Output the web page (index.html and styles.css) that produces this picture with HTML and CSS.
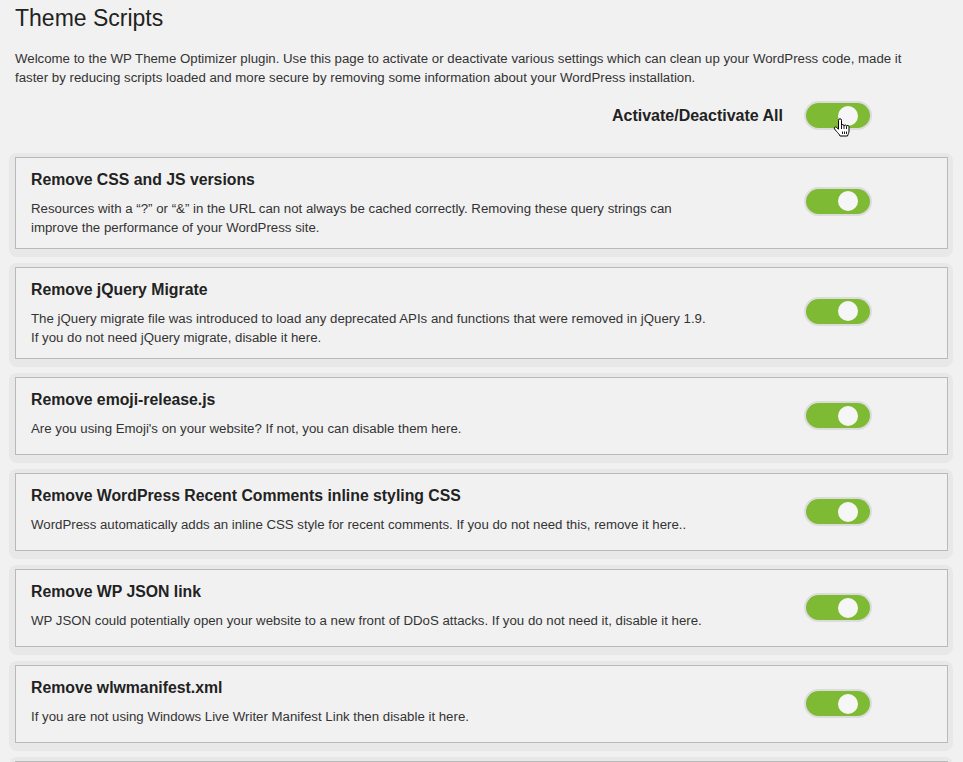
FILE: index.html
```html
<!DOCTYPE html>
<html lang="en">
<head>
<meta charset="utf-8">
<title>Theme Scripts</title>
<link rel="stylesheet" href="styles.css">
</head>
<body>
<div class="wrap">
  <h2 class="page-title">Theme Scripts</h2>
  <p class="intro">Welcome to the WP Theme Optimizer plugin. Use this page to activate or deactivate various settings which can clean up your WordPress code, made it<br>faster by reducing scripts loaded and more secure by removing some information about your WordPress installation.</p>

  <div class="all-row">
    <span class="all-label">Activate/Deactivate All</span>
    <span class="toggle toggle-all">
      <span class="knob"></span>
      <svg class="cursor" width="18" height="19" viewBox="0 0 18 19" aria-hidden="true">
        <path d="M5.5 2.3 A1.5 1.5 0 0 1 8.5 2.3 V7.4 A1.3 1.3 0 0 1 11 7.8 A1.3 1.3 0 0 1 13.5 8.4 A1.25 1.25 0 0 1 16 9.2 V13 C16 15 15 16.2 14.5 18 H7 C6.5 16.4 5 15 3.4 13.3 L1.6 11 A1.2 1.2 0 0 1 3.5 9.4 L5.5 11.2 Z" fill="#fff" stroke="#000" stroke-width="1" stroke-linejoin="round"/>
        <path d="M8.5 7.4 V11 M11 7.8 V11 M13.5 8.4 V11 M9.5 13.5 V16 M11.5 13.5 V16 M13.5 13.5 V16" fill="none" stroke="#000" stroke-width="0.9"/>
      </svg>
    </span>
  </div>

  <div class="card-frame">
    <div class="card">
      <div class="card-text">
        <h3 class="card-title">Remove CSS and JS versions</h3>
        <p class="card-desc">Resources with a “?” or “&amp;” in the URL can not always be cached correctly. Removing these query strings can<br>improve the performance of your WordPress site.</p>
      </div>
      <span class="toggle toggle-high"><span class="knob"></span></span>
    </div>
  </div>

  <div class="card-frame">
    <div class="card">
      <div class="card-text">
        <h3 class="card-title">Remove jQuery Migrate</h3>
        <p class="card-desc">The jQuery migrate file was introduced to load any deprecated APIs and functions that were removed in jQuery 1.9.<br>If you do not need jQuery migrate, disable it here.</p>
      </div>
      <span class="toggle toggle-high"><span class="knob"></span></span>
    </div>
  </div>

  <div class="card-frame">
    <div class="card">
      <div class="card-text">
        <h3 class="card-title">Remove emoji-release.js</h3>
        <p class="card-desc">Are you using Emoji's on your website? If not, you can disable them here.</p>
      </div>
      <span class="toggle"><span class="knob"></span></span>
    </div>
  </div>

  <div class="card-frame">
    <div class="card">
      <div class="card-text">
        <h3 class="card-title">Remove WordPress Recent Comments inline styling CSS</h3>
        <p class="card-desc">WordPress automatically adds an inline CSS style for recent comments. If you do not need this, remove it here..</p>
      </div>
      <span class="toggle"><span class="knob"></span></span>
    </div>
  </div>

  <div class="card-frame">
    <div class="card">
      <div class="card-text">
        <h3 class="card-title">Remove WP JSON link</h3>
        <p class="card-desc">WP JSON could potentially open your website to a new front of DDoS attacks. If you do not need it, disable it here.</p>
      </div>
      <span class="toggle"><span class="knob"></span></span>
    </div>
  </div>

  <div class="card-frame">
    <div class="card">
      <div class="card-text">
        <h3 class="card-title">Remove wlwmanifest.xml</h3>
        <p class="card-desc">If you are not using Windows Live Writer Manifest Link then disable it here.</p>
      </div>
      <span class="toggle"><span class="knob"></span></span>
    </div>
  </div>

  <div class="card-frame">
    <div class="card">
      <div class="card-text"></div>
      <span class="toggle"><span class="knob"></span></span>
    </div>
  </div>
</div>
</body>
</html>
```

FILE: styles.css
```css
html, body {
  margin: 0;
  padding: 0;
  background: #f1f1f1;
}

body {
  font-family: "Liberation Sans", Arial, Helvetica, sans-serif;
  color: #333;
}

.wrap {
  padding: 0 10px 0 9px;
}

.page-title {
  margin: 4px 0 0 6px;
  font-size: 23px;
  line-height: 29px;
  font-weight: 400;
  color: #222;
}

.intro {
  margin: 16px 0 0 6px;
  font-size: 13.25px;
  line-height: 19px;
  color: #333;
  white-space: nowrap;
}

.all-row {
  margin-top: 14px;
  display: flex;
  justify-content: flex-end;
  align-items: center;
  gap: 21px;
  padding-right: 81px;
}

.all-label {
  font-size: 16px;
  line-height: 20px;
  font-weight: 700;
  color: #222;
}

.toggle {
  box-sizing: border-box;
  flex: none;
  width: 68px;
  height: 29px;
  margin-bottom: 2px;
  border: 2px solid #dcdcdc;
  border-radius: 15px;
  background: #7fba35;
  display: flex;
  align-items: center;
  justify-content: flex-end;
  padding-right: 12px;
}

.toggle-high {
  margin-bottom: 5px;
}

.knob {
  width: 20px;
  height: 20px;
  border-radius: 50%;
  background: #f6f6f6;
}

.all-row .toggle {
  margin-bottom: 0;
}

.toggle-all {
  position: relative;
}

.cursor {
  position: absolute;
  left: 27px;
  top: 15px;
}

.card-frame {
  margin-top: 23px;
  background: #e8e8e8;
  border-radius: 8px;
  padding: 4px 5px 8px 6px;
}

.card-frame + .card-frame {
  margin-top: 6px;
}

.card {
  box-sizing: border-box;
  min-height: 78px;
  border: 1px solid #b9b9b9;
  background: #f1f1f1;
  display: flex;
  align-items: center;
  padding: 12px 75px 11px 15px;
}

.card-text {
  flex: 1;
  align-self: flex-start;
}

.card-title {
  margin: 0;
  font-size: 15.8px;
  line-height: 20px;
  font-weight: 700;
  color: #222;
}

.card-desc {
  margin: 9px 0 0;
  font-size: 13.25px;
  line-height: 19px;
  color: #333;
}
```
